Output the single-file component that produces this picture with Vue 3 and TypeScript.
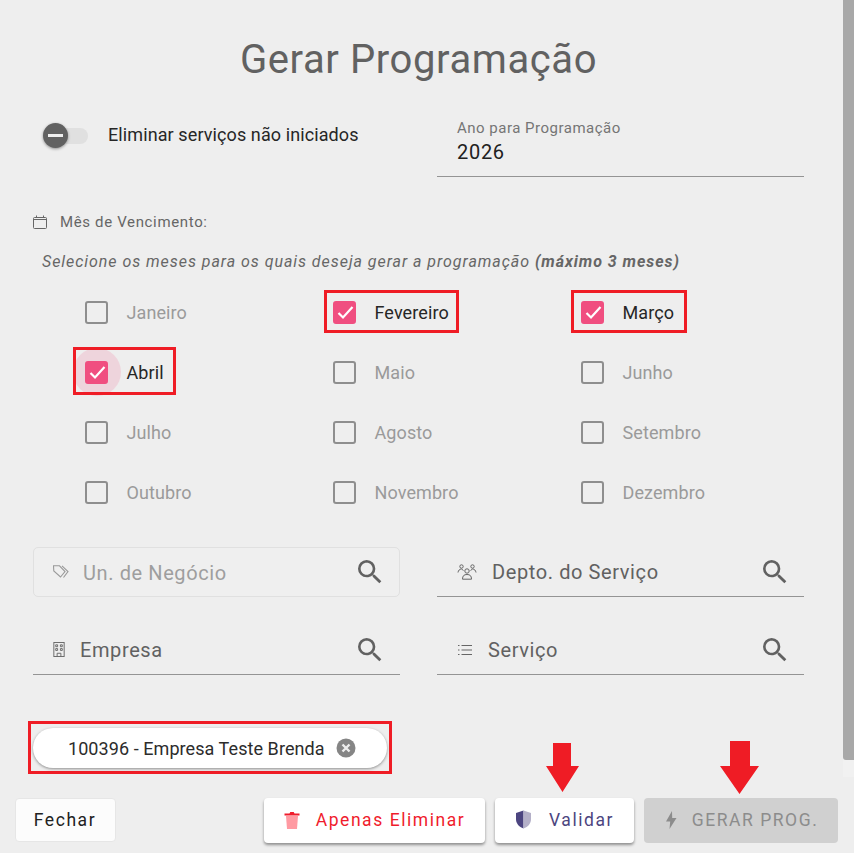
<template>
  <div class="dialog">
    <div class="content">
      <h1 class="title">Gerar Programação</h1>

      <div class="top-row">
        <div class="toggle-wrap">
          <div class="toggle">
            <div class="track"></div>
            <div class="thumb"><span class="minus"></span></div>
          </div>
          <span class="toggle-label">Eliminar serviços não iniciados</span>
        </div>
        <div class="year-field">
          <label>Ano para Programação</label>
          <div class="year-value">2026</div>
        </div>
      </div>

      <div class="section-label">
        <svg class="cal" width="14" height="14" viewBox="0 0 14 14" fill="none" stroke="#666" stroke-width="1">
          <rect x="0.5" y="2.5" width="13" height="11" rx="1" />
          <path d="M0.5 4.5h13M3.5 0.5v2M10.5 0.5v2" />
        </svg>
        <span>Mês de Vencimento:</span>
      </div>
      <p class="hint">Selecione os meses para os quais deseja gerar a programação <b>(máximo 3 meses)</b></p>

      <div class="months">
        <div v-for="m in months" :key="m.name" class="month" :class="{ checked: m.checked }">
          <span v-if="m.name === 'Abril'" class="ripple"></span>
          <span class="box">
            <svg v-if="m.checked" width="23" height="23" viewBox="0 0 23 23" fill="none" stroke="#fff" stroke-width="2.2">
              <path d="M5.500 12l4.500 4.500 9.500-10.500" />
            </svg>
          </span>
          <span class="month-name">{{ m.name }}</span>
          <span v-if="m.mark" class="mark" :class="m.mark"></span>
        </div>
      </div>

      <div class="fields">
        <div class="field outlined">
          <svg class="ico ico-tag" width="16" height="14" viewBox="0 0 16 14" fill="none" stroke="#999" stroke-width="1.100">
            <path d="M0.500 0.800h6l5.500 5.700-4.500 5.500L0.800 6z" />
            <path d="M9 0.800l6 5.700-4.500 6" />
          </svg>
          <span class="field-text disabled">Un. de Negócio</span>
          <svg class="search" width="32" height="32" viewBox="0 0 24 24" fill="#616161"><path :d="searchPath" /></svg>
        </div>
        <div class="field">
          <svg class="ico ico-people" width="20" height="16" viewBox="0 0 20 16" fill="none" stroke="#666" stroke-width="1">
            <circle cx="10" cy="7" r="2.200" />
            <circle cx="4.500" cy="2.500" r="1.700" />
            <circle cx="15.500" cy="2.500" r="1.700" />
            <path d="M5.500 15.200c0-3.400 1.500-4.700 4.500-4.700s4.500 1.300 4.500 4.700zM1 8.500c0.300-2 1.500-3.500 3.500-3.500l2 1.500M19 8.500c-0.300-2-1.500-3.500-3.500-3.500l-2 1.500" />
          </svg>
          <span class="field-text">Depto. do Serviço</span>
          <svg class="search" width="32" height="32" viewBox="0 0 24 24" fill="#616161"><path :d="searchPath" /></svg>
        </div>
        <div class="field">
          <svg class="ico ico-building" width="12" height="15" viewBox="0 0 12 16" fill="none" stroke="#666" stroke-width="1">
            <rect x="0.500" y="0.500" width="11" height="15" />
            <path d="M2.500 3h2v2h-2zM7.500 3h2v2h-2zM2.500 7h2v2h-2zM7.500 7h2v2h-2zM4 15.500v-3.500h4v3.500" />
          </svg>
          <span class="field-text">Empresa</span>
          <svg class="search" width="32" height="32" viewBox="0 0 24 24" fill="#616161"><path :d="searchPath" /></svg>
        </div>
        <div class="field">
          <svg class="ico ico-list" width="15" height="12" viewBox="0 0 15 12" fill="none" stroke="#666" stroke-width="1">
            <path d="M4.500 1.500h10.500M4.500 6h10.500M4.500 10.500h10.500M1 1.500h1.500M1 6h1.500M1 10.500h1.500" />
          </svg>
          <span class="field-text">Serviço</span>
          <svg class="search" width="32" height="32" viewBox="0 0 24 24" fill="#616161"><path :d="searchPath" /></svg>
        </div>
      </div>

      <div class="chips">
        <div class="chip-mark">
          <div class="chip">
            <span>100396 - Empresa Teste Brenda</span>
            <svg width="20" height="20" viewBox="0 0 20 20">
              <circle cx="10" cy="10" r="9.500" fill="#858585" />
              <path d="M6.500 6.500l7 7M13.500 6.500l-7 7" stroke="#eee" stroke-width="2.400" />
            </svg>
          </div>
        </div>
      </div>
    </div>

    <div class="actions">
      <button class="btn flat">Fechar</button>
      <div class="spacer"></div>
      <button class="btn raised red">
        <svg width="16" height="18" viewBox="0 0 16 18">
          <path d="M2 5h12l-1 13H3z" fill="#ff9aa2" />
          <path d="M0.500 2.500h5l0.800-1.500h3.400l0.800 1.500h5v2h-15z" fill="#f01c2c" />
        </svg>
        Apenas Eliminar
      </button>
      <div class="arrow-host">
        <button class="btn raised purple">
          <svg width="17" height="19" viewBox="0 0 17 19">
            <path d="M8.500 0.500L1 3v6c0 4.500 3 8 7.500 9.500z" fill="#4c4580" />
            <path d="M8.500 0.500L16 3v6c0 4.500-3 8-7.500 9.500z" fill="#b4b0c8" />
          </svg>
          Validar
        </button>
        <svg class="arrow arrow-a" width="33" height="49" viewBox="0 0 33 49"><path d="M7 0h18v23h8L16.500 49 0 23h7z" fill="#ef1c25" /></svg>
      </div>
      <div class="arrow-host">
        <button class="btn gerar">
          <svg width="11" height="18" viewBox="0 0 11 18"><path d="M6 0L0 10.500h4.200L3.500 18l7-11H6.200z" fill="#8c8c8c" /></svg>
          GERAR PROG.
        </button>
        <svg class="arrow arrow-b" width="39" height="53" viewBox="0 0 39 53"><path d="M10 0h20v25h9L19.500 53 0 25h10z" fill="#ef1c25" /></svg>
      </div>
    </div>

    <div class="scrollbar"><div class="scroll-thumb"></div></div>
  </div>
</template>

<script setup lang="ts">
const searchPath =
  "M15.500 14h-.79l-.28-.27A6.471 6.471 0 0 0 16 9.500 6.500 6.500 0 1 0 9.500 16c1.610 0 3.090-.59 4.230-1.570l.27.28v.79l5 4.990L20.490 19l-4.990-5zm-6 0C7.010 14 5 11.990 5 9.500S7.010 5 9.500 5 14 7.010 14 9.500 11.990 14 9.500 14z";

const marks: Record<string, string> = {
  Fevereiro: "mark-feb",
  "Março": "mark-mar",
  Abril: "mark-abr",
};

const months = [
  "Janeiro", "Fevereiro", "Março",
  "Abril", "Maio", "Junho",
  "Julho", "Agosto", "Setembro",
  "Outubro", "Novembro", "Dezembro",
].map((name) => ({ name, checked: name in marks, mark: marks[name] }));
</script>

<style>
html, body {
  margin: 0;
  overflow: hidden;
  background: #eeeeee;
}
</style>

<style scoped>
.dialog {
  position: relative;
  width: 854px;
  height: 853px;
  overflow: hidden;
  background: #eeeeee;
  font-family: Roboto, "Liberation Sans", sans-serif;
}

.content {
  padding: 0 50px 0 33px;
}

.title {
  margin: 0;
  padding-top: 38px;
  height: 44px;
  text-align: center;
  font-size: 40px;
  line-height: 44px;
  font-weight: 400;
  letter-spacing: 0.600px;
  color: #616161;
}

.top-row {
  display: flex;
  align-items: flex-start;
  gap: 37px;
  margin-top: 18px;
}

.toggle-wrap {
  width: 367px;
  display: flex;
  align-items: center;
  padding-left: 10px;
  box-sizing: border-box;
  height: 72px;
}

.toggle {
  position: relative;
  width: 45px;
  height: 26px;
  margin-right: 20px;
}

.track {
  position: absolute;
  left: 1px;
  top: 5px;
  width: 44px;
  height: 16px;
  border-radius: 8px;
  background: #e0e0e0;
}

.thumb {
  position: absolute;
  left: 0;
  top: 0;
  width: 25px;
  height: 25px;
  border-radius: 50%;
  background: #616161;
  box-shadow: 0 1px 3px rgba(0, 0, 0, 0.4);
  display: flex;
  align-items: center;
  justify-content: center;
}

.minus {
  width: 15px;
  height: 3px;
  background: #eee;
}

.toggle-label {
  font-size: 18px;
  line-height: 24px;
  margin-top: -2px;
  letter-spacing: 0.100px;
  color: #262626;
}

.year-field {
  width: 367px;
  height: 77px;
  border-bottom: 1px solid #949494;
  padding-left: 20px;
  box-sizing: border-box;
  padding-top: 20px;
}

.year-field label {
  display: block;
  font-size: 15px;
  line-height: 16px;
  letter-spacing: 0.500px;
  color: #757575;
}

.year-value {
  font-size: 20px;
  line-height: 26px;
  margin-top: 3px;
  letter-spacing: 0.700px;
  color: #212121;
}

.section-label {
  display: flex;
  align-items: center;
  margin-top: 35px;
  height: 20px;
  font-size: 15px;
  letter-spacing: 0.650px;
  color: #666;
}

.cal {
  margin-right: 13px;
}

.hint {
  margin: 20px 0 0 9px;
  font-size: 16px;
  line-height: 20px;
  font-style: italic;
  letter-spacing: 0.950px;
  color: #666;
}

.months {
  display: grid;
  grid-template-columns: repeat(3, 248px);
  grid-auto-rows: 60px;
  margin: 10px 0 0 52px;
}

.month {
  position: relative;
  display: flex;
  align-items: center;
}

.ripple {
  position: absolute;
  left: -12px;
  top: 6px;
  width: 48px;
  height: 48px;
  border-radius: 50%;
  background: rgba(240, 80, 130, 0.16);
}

.box {
  position: relative;
  flex: none;
  width: 23px;
  height: 23px;
  box-sizing: border-box;
  border: 2px solid #8e8e8e;
  border-radius: 3px;
  display: flex;
  align-items: center;
  justify-content: center;
  margin-right: 18.500px;
}

.box svg {
  flex: none;
}

.checked .box {
  background: #f04e80;
  border-color: #f04e80;
}

.month-name {
  position: relative;
  font-size: 18px;
  letter-spacing: 0.100px;
  color: #9a9a9a;
}

.checked .month-name {
  color: #262626;
}

.mark {
  position: absolute;
  box-sizing: border-box;
  border: 3px solid #ef1c25;
}

.mark-feb {
  left: -9px;
  top: 8px;
  width: 135px;
  height: 43px;
}

.mark-mar {
  left: -10px;
  top: 8px;
  width: 116px;
  height: 43px;
}

.mark-abr {
  left: -12px;
  top: 5px;
  width: 103px;
  height: 48px;
}

.fields {
  display: grid;
  grid-template-columns: 367px 367px;
  column-gap: 37px;
  row-gap: 28px;
  margin-top: 25px;
}

.field {
  height: 50px;
  box-sizing: border-box;
  display: flex;
  align-items: center;
  padding: 0 13px 0 20px;
  border-bottom: 1px solid #949494;
}

.field.outlined {
  border: 1px solid #e0e0e0;
  border-radius: 5px;
  background: #efefef;
  padding-left: 19px;
  padding-right: 13px;
}

.field:nth-child(3) {
  padding-right: 14px;
}

.ico {
  flex: none;
}

.ico-tag {
  margin-right: 14px;
}

.ico-people,
.ico-building {
  margin-right: 15px;
}

.ico-list {
  margin-right: 16px;
}

.field-text {
  flex: 1;
  font-size: 20px;
  letter-spacing: 0.600px;
  color: #616161;
}

.field-text.disabled {
  color: #9e9e9e;
  padding-top: 2px;
}

.search {
  flex: none;
}

.chips {
  margin-top: 46px;
}

.chip-mark {
  display: inline-flex;
  margin-left: -5px;
  padding: 4px 2px 3px;
  border: 3px solid #ef1c25;
}

.chip {
  display: flex;
  align-items: center;
  width: 354px;
  height: 40px;
  box-sizing: border-box;
  padding-left: 35px;
  border-radius: 20px;
  background: #fff;
  box-shadow: 0 1px 3px rgba(0, 0, 0, 0.4);
  font-size: 18px;
  letter-spacing: 0.070px;
  color: #2c2c2c;
  gap: 11px;
}

.chip svg {
  flex: none;
}

.actions {
  position: absolute;
  left: 15px;
  top: 798px;
  width: 823px;
  display: flex;
  align-items: flex-start;
  gap: 10px;
}

.spacer {
  flex: 1;
}

.btn {
  height: 45px;
  box-sizing: border-box;
  border: none;
  border-radius: 4px;
  font-family: inherit;
  font-size: 17.500px;
  letter-spacing: 1.550px;
  display: flex;
  align-items: center;
  justify-content: center;
  background: #fff;
  padding: 0 0 2px;
}

.btn svg {
  flex: none;
}

.flat {
  width: 101px;
  height: 44px;
  border: 1px solid #e6e6e6;
  color: #212121;
  background: #fcfcfc;
  padding: 0 1px 0 0;
}

.raised {
  box-shadow: 0 2px 3px rgba(0, 0, 0, 0.4);
}

.red {
  width: 221px;
  color: #f01c2c;
  gap: 16px;
}

.purple {
  width: 139px;
  color: #4c4580;
  gap: 17px;
}

.gerar {
  width: 194px;
  background: #d0d0d0;
  color: #8c8c8c;
  gap: 15px;
  padding-left: 2px;
}

.arrow-host {
  position: relative;
}

.arrow {
  position: absolute;
}

.arrow-a {
  left: 51px;
  top: -55px;
}

.arrow-b {
  left: 76px;
  top: -57px;
}

.scrollbar {
  position: absolute;
  left: 843px;
  top: 0;
  width: 11px;
  height: 777px;
  background: #f1f1f1;
}

.scroll-thumb {
  height: 760px;
  background: #a8a8a8;
  border-bottom-left-radius: 3px;
}
</style>
